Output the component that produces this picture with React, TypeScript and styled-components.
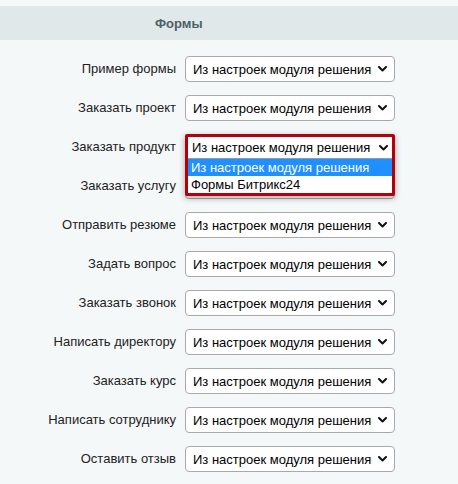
import React from "react";
import styled, { createGlobalStyle } from "styled-components";

const Global = createGlobalStyle`
  html, body { margin: 0; padding: 0; background: #f5f8f9; }
  body { font-family: Arial, "Liberation Sans", sans-serif; font-size: 13px; color: #222; }
`;

const Page = styled.div`
  padding-top: 6px;
  width: 458px;
  height: 484px;
  box-sizing: border-box;
  background: #f5f8f9;
  overflow: hidden;
`;

const Header = styled.div`
  height: 34px;
  background: #e0e8ea;
  display: flex;
  align-items: center;
  padding-left: 155px;
  font-weight: bold;
  font-size: 13px;
  color: #4d6168;
`;

const Table = styled.div`
  display: grid;
  grid-template-columns: 176px 210px;
  column-gap: 9px;
  grid-auto-rows: 39px;
  padding-top: 16px;
`;

const Label = styled.div`
  text-align: right;
  height: 26px;
  line-height: 26px;
  color: #222;
  white-space: nowrap;
`;

const Cell = styled.div`
  position: relative;
  height: 26px;
`;

const SelectBox = styled.div`
  box-sizing: border-box;
  height: 26px;
  width: 210px;
  border: 1px solid #a9a9a9;
  border-radius: 4px;
  background: #fff;
  display: flex;
  align-items: center;
  justify-content: space-between;
  padding: 0 7px 0 7px;
  color: #000;
  white-space: nowrap;
`;

const Popup = styled.div`
  position: absolute;
  left: 0;
  top: 0;
  width: 210px;
  box-sizing: border-box;
  border: 3px solid #b4000a;
  border-radius: 2px;
  background: #fff;
  box-shadow: 0 2px 6px rgba(0, 0, 0, 0.35);
  z-index: 2;
`;

const Face = styled.div`
  height: 21px;
  display: flex;
  align-items: center;
  justify-content: space-between;
  padding: 0 4px 0 4px;
  color: #000;
  white-space: nowrap;
`;

const List = styled.div`
  border-top: 1px solid #9a9a9a;
`;

const Option = styled.div<{ $active?: boolean }>`
  height: 17px;
  line-height: 17px;
  padding: 0 3px;
  background: ${(p) => (p.$active ? "#1e90ff" : "#fff")};
  color: ${(p) => (p.$active ? "#fff" : "#000")};
  white-space: nowrap;
`;

const Chevron = () => (
  <svg width="9" height="6" viewBox="0 0 9 6" style={{ flex: "none" }}>
    <polyline
      points="1,1 4.5,4.5 8,1"
      fill="none"
      stroke="#111"
      strokeWidth="2"
      strokeLinecap="round"
      strokeLinejoin="round"
    />
  </svg>
);

const labels = [
  "Пример формы",
  "Заказать проект",
  "Заказать продукт",
  "Заказать услугу",
  "Отправить резюме",
  "Задать вопрос",
  "Заказать звонок",
  "Написать директору",
  "Заказать курс",
  "Написать сотруднику",
  "Оставить отзыв",
];

const VALUE = "Из настроек модуля решения";

export default function App() {
  return (
    <Page>
      <Global />
      <Header>Формы</Header>
      <Table>
        {labels.map((l, i) => (
          <React.Fragment key={l}>
            <Label>{l}</Label>
            <Cell>
              {i === 2 ? (
                <Popup>
                  <Face>
                    <span>{VALUE}</span>
                    <Chevron />
                  </Face>
                  <List>
                    <Option $active>{VALUE}</Option>
                    <Option>Формы Битрикс24</Option>
                  </List>
                </Popup>
              ) : (
                <SelectBox>
                  <span>{VALUE}</span>
                  <Chevron />
                </SelectBox>
              )}
            </Cell>
          </React.Fragment>
        ))}
      </Table>
    </Page>
  );
}
